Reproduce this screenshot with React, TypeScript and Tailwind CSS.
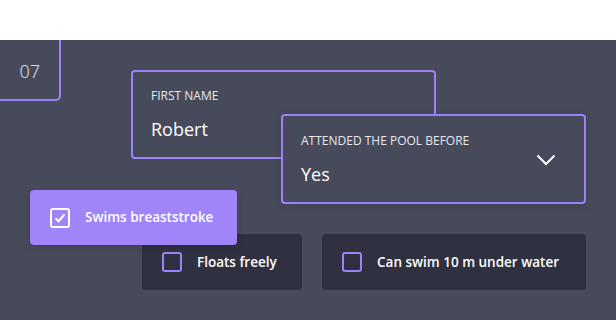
const font = { fontFamily: "'Open Sans', 'Noto Sans', sans-serif" };

function Check({ on }: { on?: boolean }) {
  return (
    <span
      className={`flex h-5 w-5 shrink-0 items-center justify-center rounded-[3px] border-2 ${
        on ? "border-white" : "border-[#9c82f7]"
      }`}
    >
      {on && (
        <svg width="12" height="10" viewBox="0 0 12 10" fill="none">
          <path d="M1.5 5.2 4.5 8.2 10.5 1.5" stroke="white" strokeWidth="2" />
        </svg>
      )}
    </span>
  );
}

function Option({ label, on, className }: { label: string; on?: boolean; className: string }) {
  return (
    <div
      className={`absolute flex items-center gap-[15px] rounded-[4px] px-5 text-[13.5px] font-semibold text-white ${
        on ? "bg-[#a085fa] shadow-[0_2px_6px_rgba(0,0,0,0.15)]" : "bg-[#2f3140]"
      } ${className}`}
    >
      <Check on={on} />
      <span>{label}</span>
    </div>
  );
}

function Field({ label, value }: { label: string; value: string }) {
  return (
    <div>
      <div className="text-[12px] leading-[16px] text-[#e8e8ef]">{label}</div>
      <div className="mt-[13px] text-[18px] leading-[24px] text-white">{value}</div>
    </div>
  );
}

export default function App() {
  return (
    <div className="h-[320px] w-[616px] overflow-hidden bg-white" style={font}>
      <div className="relative mt-10 h-[280px] overflow-hidden bg-[#474a5b]">
        <div className="absolute left-[-20px] top-[-20px] flex h-[81px] w-[81px] items-end justify-end rounded-[5px] border-2 border-[#9c82f7] pb-[14px] pr-[19px] text-[18px] font-light text-[#e9e9f0]">
          07
        </div>

        <div className="absolute left-[131px] top-[30px] h-[89px] w-[305px] rounded-[4px] border-2 border-[#9c82f7] bg-[#474a5b] px-[18px] pt-[16px]">
          <Field label="FIRST NAME" value="Robert" />
        </div>

        <div className="absolute left-[281px] top-[74px] flex h-[90px] w-[305px] items-start justify-between rounded-[4px] border-2 border-[#9c82f7] bg-[#474a5b] pl-[18px] pr-[28px] pt-[17px] shadow-[0_2px_8px_rgba(0,0,0,0.12)]">
          <Field label="ATTENDED THE POOL BEFORE" value="Yes" />
          <svg width="20" height="12" viewBox="0 0 20 12" fill="none" className="mt-[21px]">
            <path d="M1.5 1.5 10 10 18.5 1.5" stroke="white" strokeWidth="2" />
          </svg>
        </div>

        <Option label="Floats freely" className="left-[142px] top-[194px] h-[56px] w-[160px]" />
        <Option label="Can swim 10 m under water" className="left-[322px] top-[194px] h-[56px] w-[264px]" />
        <Option label="Swims breaststroke" on className="left-[30px] top-[150px] h-[55px] w-[207px]" />
      </div>
    </div>
  );
}
